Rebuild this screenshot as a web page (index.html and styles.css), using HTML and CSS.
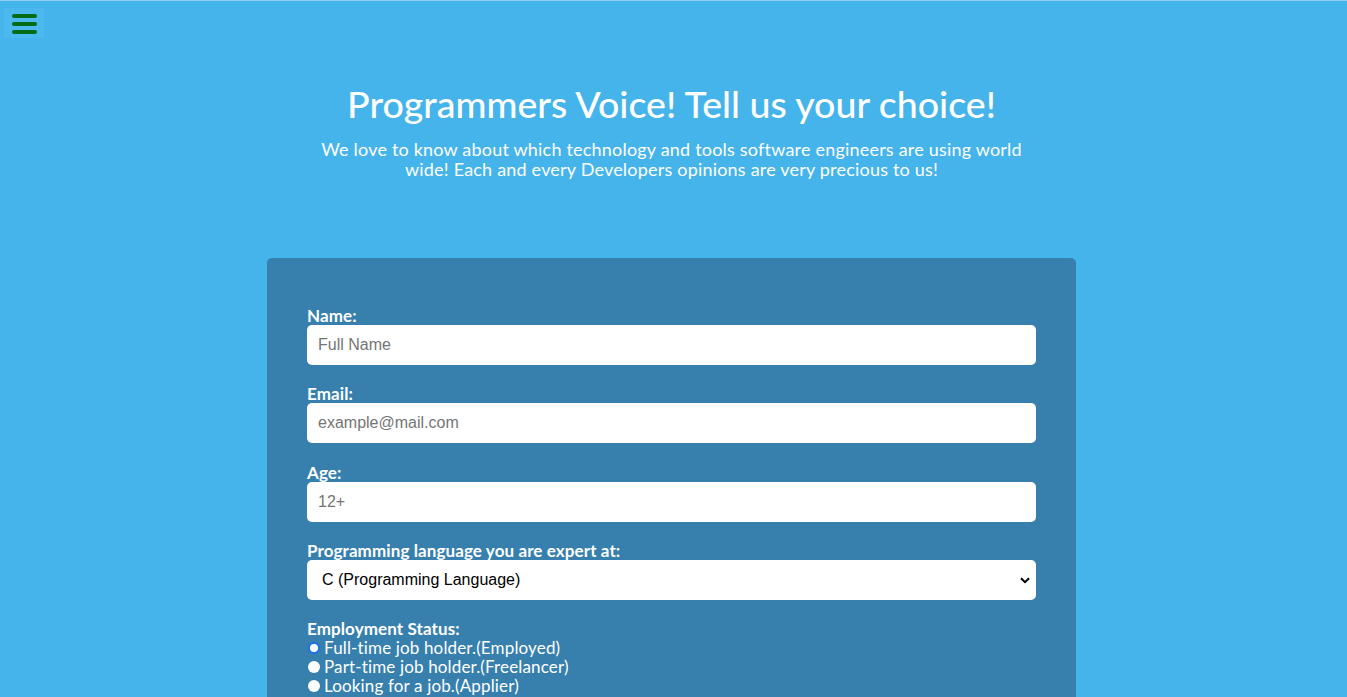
FILE: index.html
```html
<!DOCTYPE html>
<html>
<head>
<meta charset="utf-8">
<link rel="stylesheet" href="styles.css">
</head>
<body>
<div class="topbar">
  <button class="menu" aria-label="menu">
    <span></span><span></span><span></span>
  </button>
</div>
<header class="hero">
  <h1>Programmers Voice! Tell us your choice!</h1>
  <p>We love to know about which technology and tools software engineers are using world wide! Each and every Developers opinions are very precious to us!</p>
</header>
<form class="card">
  <div class="group">
    <label for="name">Name:</label>
    <input id="name" type="text" placeholder="Full Name">
  </div>
  <div class="group">
    <label for="email">Email:</label>
    <input id="email" type="email" placeholder="example@mail.com">
  </div>
  <div class="group">
    <label for="age">Age:</label>
    <input id="age" type="number" placeholder="12+">
  </div>
  <div class="group">
    <label for="lang">Programming language you are expert at:</label>
    <div class="selectwrap">
      <select id="lang">
        <option>C (Programming Language)</option>
      </select>
      <svg class="chev" width="10" height="7" viewBox="0 0 10 7"><path d="M1 1.2 L5 5.2 L9 1.2" fill="none" stroke="#000" stroke-width="2"/></svg>
    </div>
  </div>
  <div class="group radios">
    <div class="rlabel">Employment Status:</div>
    <label class="opt"><span class="dot active"></span>Full-time job holder.(Employed)</label>
    <label class="opt"><span class="dot"></span>Part-time job holder.(Freelancer)</label>
    <label class="opt"><span class="dot"></span>Looking for a job.(Applier)</label>
  </div>
</form>
</body>
</html>
```
FILE: styles.css
```css
html, body {
  margin: 0;
  padding: 0;
}
body {
  background: #45b4eb;
  border-top: 1px solid #8fd0f0;
  font-family: "Lato", "Open Sans", sans-serif;
  color: #fff;
  height: 696px;
  overflow: hidden;
  padding-right: 4px;
}
.topbar {
  height: 37px;
  padding: 7px 0 0 4px;
  box-sizing: border-box;
}
.menu {
  width: 40px;
  height: 30px;
  background: #4cb9ee;
  border: none;
  padding: 6px 0 0 8px;
  box-sizing: border-box;
  display: flex;
  flex-direction: column;
  gap: 4px;
  align-items: flex-start;
}
.menu span {
  display: block;
  width: 25px;
  height: 4px;
  border-radius: 2px;
  background: #036b16;
}
.hero {
  text-align: center;
  padding-top: 46px;
}
.hero h1 {
  margin: 0;
  font-size: 37.5px;
  font-weight: 500;
  line-height: 40px;
  letter-spacing: 0;
}
.hero p {
  margin: 15px auto 0;
  max-width: 720px;
  font-size: 18px;
  line-height: 20px;
  font-weight: 400;
  letter-spacing: 0.2px;
}
.card {
  width: 809px;
  margin: 79px auto 0;
  background: #3780ae;
  border-radius: 5px;
  padding: 48px 40px 40px;
  box-sizing: border-box;
}
.group {
  display: flex;
  flex-direction: column;
  margin-bottom: 19.3px;
}
.group label, .rlabel {
  font-size: 17px;
  font-weight: 700;
  line-height: 19px;
  letter-spacing: 0.1px;
}
.group input, .group select {
  height: 40px;
  width: 100%;
  box-sizing: border-box;
  border: none;
  border-radius: 5px;
  background: #fff;
  padding: 0 11px;
  font-family: "Liberation Sans", Arial, sans-serif;
  font-size: 16px;
  font-weight: 400;
  letter-spacing: 0;
  color: #000;
  outline: none;
}
.group input::placeholder {
  color: #757575;
}
.selectwrap {
  position: relative;
}
.group select {
  appearance: none;
  -webkit-appearance: none;
  padding: 0 15px;
}
.chev {
  position: absolute;
  right: 6px;
  top: 17px;
  pointer-events: none;
}
.opt {
  display: flex;
  align-items: center;
  font-size: 17px !important;
  font-weight: 400 !important;
  line-height: 19px !important;
  letter-spacing: 0.15px !important;
}
.dot {
  width: 12px;
  height: 12px;
  border-radius: 50%;
  background: #fff;
  box-sizing: border-box;
  margin: 0 4px 0 1px;
  flex: none;
}
.dot.active {
  border: 2px solid #1a73e8;
}
```
